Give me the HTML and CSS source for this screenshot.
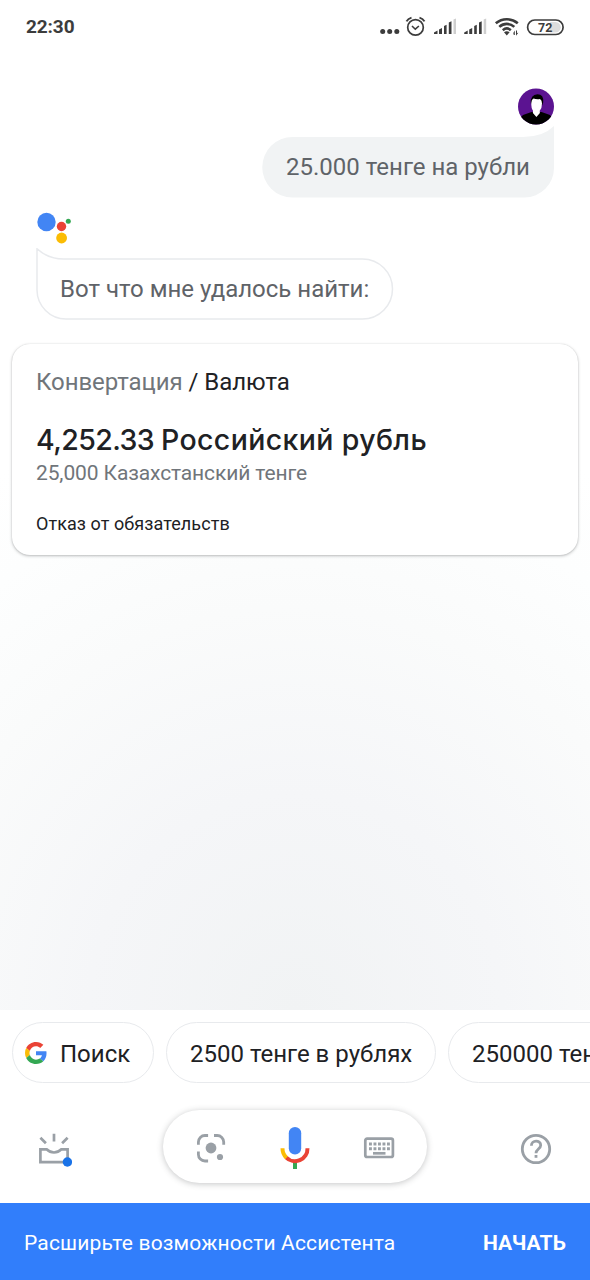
FILE: index.html
```
<!DOCTYPE html>
<html lang="ru">
<head>
<meta charset="utf-8">
<meta name="viewport" content="width=device-width, initial-scale=1">
<title>Ассистент</title>
<link rel="stylesheet" href="styles.css">
</head>
<body>
<div class="screen">
  <header class="status">
    <span class="clock">22:30</span>
    <svg class="status-icons" width="188" height="24" viewBox="0 0 188 24" fill="none" stroke="#3c3c3c">
      <g fill="#3c3c3c" stroke="none"><circle cx="4.7" cy="16.4" r="2.5"/><circle cx="11.7" cy="16.4" r="2.5"/><circle cx="18.8" cy="16.4" r="2.5"/></g>
      <circle cx="37.5" cy="12.4" r="7.800" stroke-width="1.700"/>
      <path d="M34 11l3.300 3.200 3.600-3.200" stroke-width="1.600"/>
      <path d="M28.500 6.400q1.500-2.800 5-3.800M46.500 6.400q-1.500-2.800-5-3.800" stroke-width="2"/>
      <g fill="#3c3c3c" stroke="none">
        <path d="M56 19v-1.500l3.500-2V19zM61 14.500l3-1.500v6h-3zM66 11l2.600-1.200V19H66zM70.800 7.500l2.700-1.200V19h-2.700z"/>
        <path d="M86.200 19v-1.500l3.500-2V19zM91.200 14.500l3-1.500v6h-3zM96.200 11l2.600-1.200V19h-2.600zM101 7.500l2.700-1.200V19H101z"/>
        <path fill="#cfcfcf" d="M75.500 4.600l2.500-1V19h-2.500zM105.700 4.600l2.500-1V19h-2.500z"/>
      </g>
      <g stroke-width="2.600"><path d="M117.800 8.300c6.500-5.500 15.500-5.500 22 0M121.300 11.900c4.500-4 10.500-4 15 0M124.800 15.200c2.600-2.200 5.500-2.200 8 0"/></g>
      <path fill="#3c3c3c" stroke="none" d="M126 17.300q2.800-2 5.600 0l-2.800 3.200zM135.300 18l1.500-2.500V20h-1zM138 15.500h1V18l1.300-.3-2.300 3z"/>
      <rect x="149.600" y="5" width="35.500" height="14.500" rx="7.250" stroke-width="1.700" fill="#fff"/>
      <path d="M172 7h5.500a5.250 5.250 0 0 1 0 10.500H172z" fill="#ddd" stroke="none"/>
      <text x="160" y="16.700" class="battery-text">72</text>
    </svg>
  </header>

  <main class="chat">
    <div class="avatar-row">
      <svg class="avatar" width="36" height="37" viewBox="0 0 36 37">
        <clipPath id="face"><circle cx="18" cy="18.500" r="18"/></clipPath>
        <g clip-path="url(#face)">
          <path fill="#5b1391" d="M0 0h36v37H0z"/>
          <path fill="#000" d="M0 32l5-5 8.500-3h10l8.500 3 4 5v5H0zM12.800 15.500q-.6-9 6.700-9.200 6.500.2 5.700 8l-1 3z"/>
          <path fill="#fff" d="M13.300 15q.2-3.600 2.200-4.500 3 1.200 6.500.6 2 1.400 2 4.400 0 4.800-2.300 7.300l.2 2.200-3.500 4-3.500-4 .1-2.200q-1.900-2.500-1.700-7.800z"/>
        </g>
      </svg>
    </div>
    <div class="user-bubble">
      <svg class="bubble-shape" width="292" height="73" viewBox="0 0 292 73"><path fill="#f1f3f4" d="M30.500 12H261Q281 12 292 1V43a29.500 29.500 0 0 1-29.500 29.500h-232A30.250 30.250 0 0 1 30.500 12z"/></svg>
      <span class="bubble-text user-text">25.000 тенге на рубли</span>
    </div>
    <svg class="assistant-logo" width="36" height="34" viewBox="0 0 36 34"><circle cx="10.500" cy="11" r="9.200" fill="#4285f4"/><circle cx="25.500" cy="15.500" r="4.700" fill="#ea4335"/><circle cx="32.300" cy="10.300" r="2.500" fill="#34a853"/><circle cx="25.600" cy="27" r="5.400" fill="#fbbc04"/></svg>
    <div class="reply-bubble">
      <svg class="bubble-shape" width="358" height="72" viewBox="0 0 358 72"><path fill="#fff" stroke="#e8eaed" stroke-width="1.500" d="M1 .8Q12 11 28 11H326.500a30 30 0 0 1 0 60H30A29.200 29.200 0 0 1 1 42z"/></svg>
      <span class="bubble-text reply-text">Вот что мне удалось найти:</span>
    </div>

    <section class="card">
      <p class="crumbs"><span class="muted">Конвертация</span> / Валюта</p>
      <h1 class="amount"><span class="figure">4,252.33</span> <span class="currency">Российский рубль</span></h1>
      <p class="source">25,000 Казахстанский тенге</p>
      <p class="disclaimer">Отказ от обязательств</p>
    </section>
  </main>

  <nav class="chips">
    <button class="chip chip-search">
      <svg class="g-logo" width="22" height="22" viewBox="0 0 48 48"><path fill="#ea4335" d="M24 9.500c3.540 0 6.710 1.220 9.210 3.600l6.850-6.850C35.900 2.380 30.470 0 24 0 14.620 0 6.510 5.380 2.560 13.220l7.980 6.190C12.430 13.720 17.740 9.500 24 9.500z"/><path fill="#4285f4" d="M46.980 24.550c0-1.570-.15-3.090-.38-4.550H24v9.020h12.940c-.58 2.960-2.260 5.480-4.780 7.180l7.730 6c4.510-4.180 7.090-10.360 7.090-17.650z"/><path fill="#fbbc05" d="M10.530 28.590c-.48-1.450-.76-2.990-.76-4.590s.27-3.140.76-4.590l-7.980-6.190C.92 16.460 0 20.120 0 24c0 3.880.92 7.540 2.560 10.780l7.970-6.190z"/><path fill="#34a853" d="M24 48c6.480 0 11.930-2.130 15.890-5.810l-7.730-6c-2.150 1.450-4.920 2.300-8.160 2.300-6.260 0-11.570-4.220-13.470-9.910l-7.980 6.190C6.510 42.620 14.620 48 24 48z"/></svg>
      <span class="chip-label">Поиск</span>
    </button>
    <button class="chip chip-rub"><span class="chip-label">2500 тенге в рублях</span></button>
    <button class="chip chip-more"><span class="chip-label">250000 тенге</span></button>
  </nav>

  <div class="controls">
    <button class="icon-button" aria-label="Обзор">
      <svg width="36" height="36" viewBox="0 0 36 36" fill="none" stroke="#9aa0a6" stroke-width="2.700"><path d="M4.400 17.300h6.200q3.200 3.200 7.400 3.200t7.400-3.200h6.200v12.800H4.400zM18 1.700v7.700M4.400 5.800l5.500 5.500M31.600 5.800l-5.500 5.500"/><circle cx="31.400" cy="30" r="4.700" fill="#1a73e8" stroke="none"/></svg>
    </button>
    <div class="input-pill">
      <svg width="32" height="32" viewBox="0 0 32 32" fill="none" stroke="#9aa0a6" stroke-width="2.800"><path d="M3.400 12.700V10a6.500 6.500 0 0 1 6.500-6.500h3.200M19 3.500h3.200a6.500 6.500 0 0 1 6.500 6.500v2.700M3.400 19.500v3A6.500 6.500 0 0 0 9.900 29h3.200"/><circle cx="16" cy="16" r="5.400" fill="#9aa0a6" stroke="none"/><circle cx="25" cy="25" r="3.100" fill="#9aa0a6" stroke="none"/></svg>
      <svg width="32" height="44" viewBox="0 0 32 44" fill="none" stroke-width="4"><path stroke="#34a853" d="M16 35v8"/><path stroke="#ea4335" d="M7 31.300A12.500 12.500 0 0 0 28.500 22.300"/><path stroke="#fbbc04" d="M3.500 22.300A12.500 12.500 0 0 0 7.500 31.700"/><rect x="9.800" y="1" width="12.400" height="27.500" rx="6.200" fill="#4285f4"/></svg>
      <svg width="32" height="24" viewBox="0 0 32 24"><rect x="2.300" y="2.600" width="27.600" height="18.400" rx="1.800" fill="none" stroke="#9aa0a6" stroke-width="2.700"/><path d="M6 8h21M6 12.700h21" stroke="#9aa0a6" stroke-width="2.900" stroke-dasharray="2.900 1.600"/><path d="M10 17.300h12.500" stroke="#9aa0a6" stroke-width="2.700"/></svg>
    </div>
    <button class="icon-button help" aria-label="Справка">
      <svg width="36" height="36" viewBox="0 0 36 36" fill="none" stroke="#9aa0a6" stroke-width="2.800"><circle cx="18" cy="18" r="13.700"/><path d="M13.400 14.700c0-6.200 9.300-6 9.300-.5 0 3.700-4.700 4-4.700 8"/><path d="M18 24v2.800"/></svg>
    </button>
  </div>

  <footer class="banner">
    <span class="banner-text">Расширьте возможности Ассистента</span>
    <button class="start">НАЧАТЬ</button>
  </footer>
</div>
</body>
</html>
```
FILE: styles.css
```
* { box-sizing: border-box; margin: 0; padding: 0; }
body { font-family: Roboto, "Noto Sans", sans-serif; color: #202124; }
button { font: inherit; color: inherit; background: none; border: 0; }
svg { display: block; flex: none; }

.screen {
  display: flex;
  flex-direction: column;
  width: 590px;
  height: 1280px;
  overflow: hidden;
  background: #fff;
}

.status {
  display: flex;
  justify-content: space-between;
  align-items: center;
  height: 54px;
  padding: 0 24px 0 26px;
  color: #3c3c3c;
}
.clock { padding-bottom: 1px; font-size: 19px; font-weight: 700; letter-spacing: -0.1px; }
.battery-text { font: 700 12.500px Roboto, sans-serif; fill: #3c3c3c; stroke: none; }

.chat {
  display: flex;
  flex-direction: column;
  flex: 1;
  padding: 34px 12px 0;
  background: radial-gradient(ellipse 590px 620px at 50% 100%, #f1f3f4, #f5f6f8 35%, #fafbfb 65%, #fdfefe 85%, #fff);
}
.avatar-row { display: flex; justify-content: flex-end; padding-right: 24px; }
.user-bubble, .reply-bubble { position: relative; display: flex; }
.bubble-shape { position: absolute; top: 0; left: 0; }
.bubble-text { position: relative; font-size: 24px; line-height: 60px; color: #5f6368; white-space: nowrap; }
.user-bubble { align-self: flex-end; width: 292px; height: 73px; margin-right: 24px; padding: 12px 24px 0; }
.assistant-logo { margin: 13px 0 0 24px; }
.reply-bubble { width: 358px; height: 72px; margin: 3px 0 0 24px; padding: 11px 24px 0; }

.card {
  height: 211px;
  margin-top: 24px;
  padding: 23px 24px 0;
  border-radius: 18px;
  background: #fff;
  box-shadow: 0 1px 3px rgba(60, 64, 67, 0.35), 0 0 1px rgba(60, 64, 67, 0.2);
}
.crumbs { font-size: 24px; line-height: 30px; letter-spacing: -0.06px; }
.muted { color: #70757a; }
.amount { display: flex; gap: 7px; margin-top: 25px; font: 500 28.500px/36px Inter, sans-serif; white-space: nowrap; }
.figure { letter-spacing: -0.6px; }
.currency { letter-spacing: 0.37px; }
.source { margin-top: 2px; font-size: 21px; line-height: 26px; letter-spacing: -0.12px; color: #70757a; }
.disclaimer { margin-top: 27px; font-size: 18px; line-height: 22px; letter-spacing: 0.07px; }

.chips { display: flex; gap: 12px; height: 100px; padding: 12px 0 0 12px; background: #fff; }
.chip {
  display: flex;
  flex: none;
  align-items: center;
  height: 61px;
  padding: 0 23px;
  border: 1.500px solid #e8eaed;
  border-radius: 31px;
  font-size: 24px;
  white-space: nowrap;
}
.chip-label { padding-top: 2px; }
.chip-search { width: 142px; padding: 0 12px; gap: 13px; }
.chip-rub { width: 270px; }

.controls { display: flex; align-items: flex-start; justify-content: space-between; height: 93px; padding: 0 36px; background: #fff; }
.icon-button { padding-top: 22px; }
.help { padding-top: 21px; }
.input-pill {
  display: flex;
  align-items: center;
  justify-content: space-between;
  width: 264px;
  height: 73px;
  padding: 3px 32px 0;
  border-radius: 37px;
  background: #fff;
  box-shadow: 0 1px 6px rgba(60, 64, 67, 0.3);
}

.banner {
  display: flex;
  align-items: center;
  justify-content: space-between;
  height: 77px;
  padding: 2px 24px 0;
  background: #317efb;
  color: #fff;
}
.banner-text { font-size: 21px; letter-spacing: 0.17px; }
.start { font-size: 21px; font-weight: 700; letter-spacing: 0.1px; }
```
